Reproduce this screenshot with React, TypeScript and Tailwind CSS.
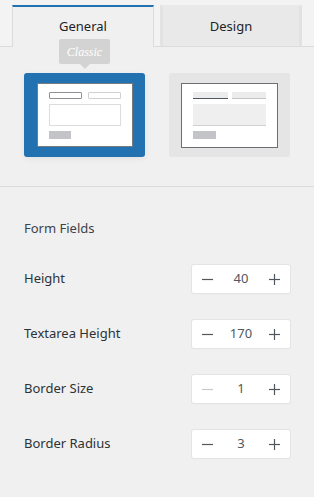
import React from 'react';

const font = { fontFamily: '"Noto Sans", "Open Sans", sans-serif' };

function Minus({ disabled }: { disabled?: boolean }) {
  return (
    <svg width="11" height="11" viewBox="0 0 11 11">
      <line x1="0" y1="5.5" x2="11" y2="5.5" stroke={disabled ? '#c9cacc' : '#50575e'} strokeWidth="1.2" />
    </svg>
  );
}

function Plus() {
  return (
    <svg width="11" height="11" viewBox="0 0 11 11">
      <line x1="0" y1="5.5" x2="11" y2="5.5" stroke="#50575e" strokeWidth="1.2" />
      <line x1="5.5" y1="0" x2="5.5" y2="11" stroke="#50575e" strokeWidth="1.2" />
    </svg>
  );
}

function Stepper({ value, minDisabled }: { value: string; minDisabled?: boolean }) {
  return (
    <div className="flex h-[28px] w-[98px] items-center justify-between rounded-[2px] bg-white px-[10px] shadow-[0_0_0_1px_#e4e4e4,0_1px_2px_rgba(0,0,0,0.04)]">
      <Minus disabled={minDisabled} />
      <span className="text-[13px] text-[#50575e]">{value}</span>
      <Plus />
    </div>
  );
}

const rows = [
  { label: 'Height', value: '40' },
  { label: 'Textarea Height', value: '170' },
  { label: 'Border Size', value: '1', minDisabled: true },
  { label: 'Border Radius', value: '3' },
];

export default function App() {
  return (
    <div className="h-[497px] w-[314px] overflow-hidden bg-[#f0f0f0]" style={font}>
      {/* Tabs */}
      <div className="flex h-[47px] items-end border-b border-[#dcdcdc] bg-[#f3f3f3] pl-[12px]">
        <div className="-mb-px flex h-[42px] w-[142px] items-center justify-center border-x border-t-2 border-[#dcdcdc] border-t-[#2271b1] bg-[#f0f0f0] text-[13px] text-[#1d2327]">
          General
        </div>
        <div className="ml-[6px] flex h-[41px] w-[142px] items-center justify-center border-x-[3px] border-t-2 border-[#e9e9e9] border-x-[#e2e2e2] bg-[#e9e9e9] text-[13px] text-[#1d2327]">
          Design
        </div>
      </div>

      {/* Style cards */}
      <div className="relative flex gap-[24px] border-b border-[#dcdcdc] px-[24px] pb-[29px] pt-[26px]">
        <div className="absolute left-[59px] top-[-8px] flex h-[25px] w-[51px] items-center justify-center rounded-[2px] bg-[#d3d3d3] text-[12px] italic text-white" style={{ fontFamily: '"Liberation Serif", serif' }}>
          Classic
          <span className="absolute bottom-[-5px] left-[21px] h-0 w-0 border-x-[5px] border-t-[5px] border-x-transparent border-t-[#d3d3d3]" />
        </div>

        <div className="h-[84px] w-[121px] rounded-[3px] bg-[#2271b1] pl-[13px] pt-[10px] shadow-[0_2px_6px_rgba(0,0,0,0.06)]">
          <div className="flex h-[64px] w-[96px] flex-col border border-[#3c434a]/70 bg-white px-[11px] pt-[8px]">
            <div className="flex gap-[6px]">
              <div className="h-[7px] w-[33px] rounded-[1px] border border-[#8c8f94]" />
              <div className="h-[7px] w-[33px] rounded-[1px] border border-[#d0d0d0]" />
            </div>
            <div className="mt-[5px] h-[22px] w-[72px] border border-[#dcdcdc]" />
            <div className="mt-[5px] h-[8px] w-[22px] bg-[#c3c4c7]" />
          </div>
        </div>

        <div className="h-[84px] w-[121px] rounded-[2px] bg-[#e5e5e5] pl-[12px] pt-[10px]">
          <div className="flex h-[65px] w-[97px] flex-col border border-[#6b6e72] bg-white px-[11px] pt-[8px]">
            <div className="flex gap-[4px]">
              <div className="h-[7px] w-[35px] border-b border-[#50575e] bg-[#ececec]" />
              <div className="h-[7px] w-[34px] border-b border-[#c3c4c7] bg-[#ececec]" />
            </div>
            <div className="mt-[5px] h-[22px] w-[73px] border-b border-[#d0d0d0] bg-[#efefef]" />
            <div className="mt-[5px] h-[8px] w-[23px] bg-[#c3c4c7]" />
          </div>
        </div>
      </div>

      {/* Form fields */}
      <div className="px-[24px] pt-[31px]">
        <h3 className="text-[13px] leading-[20px] text-[#3c434a]">Form Fields</h3>
        <div className="mt-[27px] flex flex-col gap-[27px]">
          {rows.map((r) => (
            <div key={r.label} className="flex h-[28px] items-center justify-between">
              <span className="text-[13px] text-[#2c3338]">{r.label}</span>
              <Stepper value={r.value} minDisabled={r.minDisabled} />
            </div>
          ))}
        </div>
      </div>
    </div>
  );
}
